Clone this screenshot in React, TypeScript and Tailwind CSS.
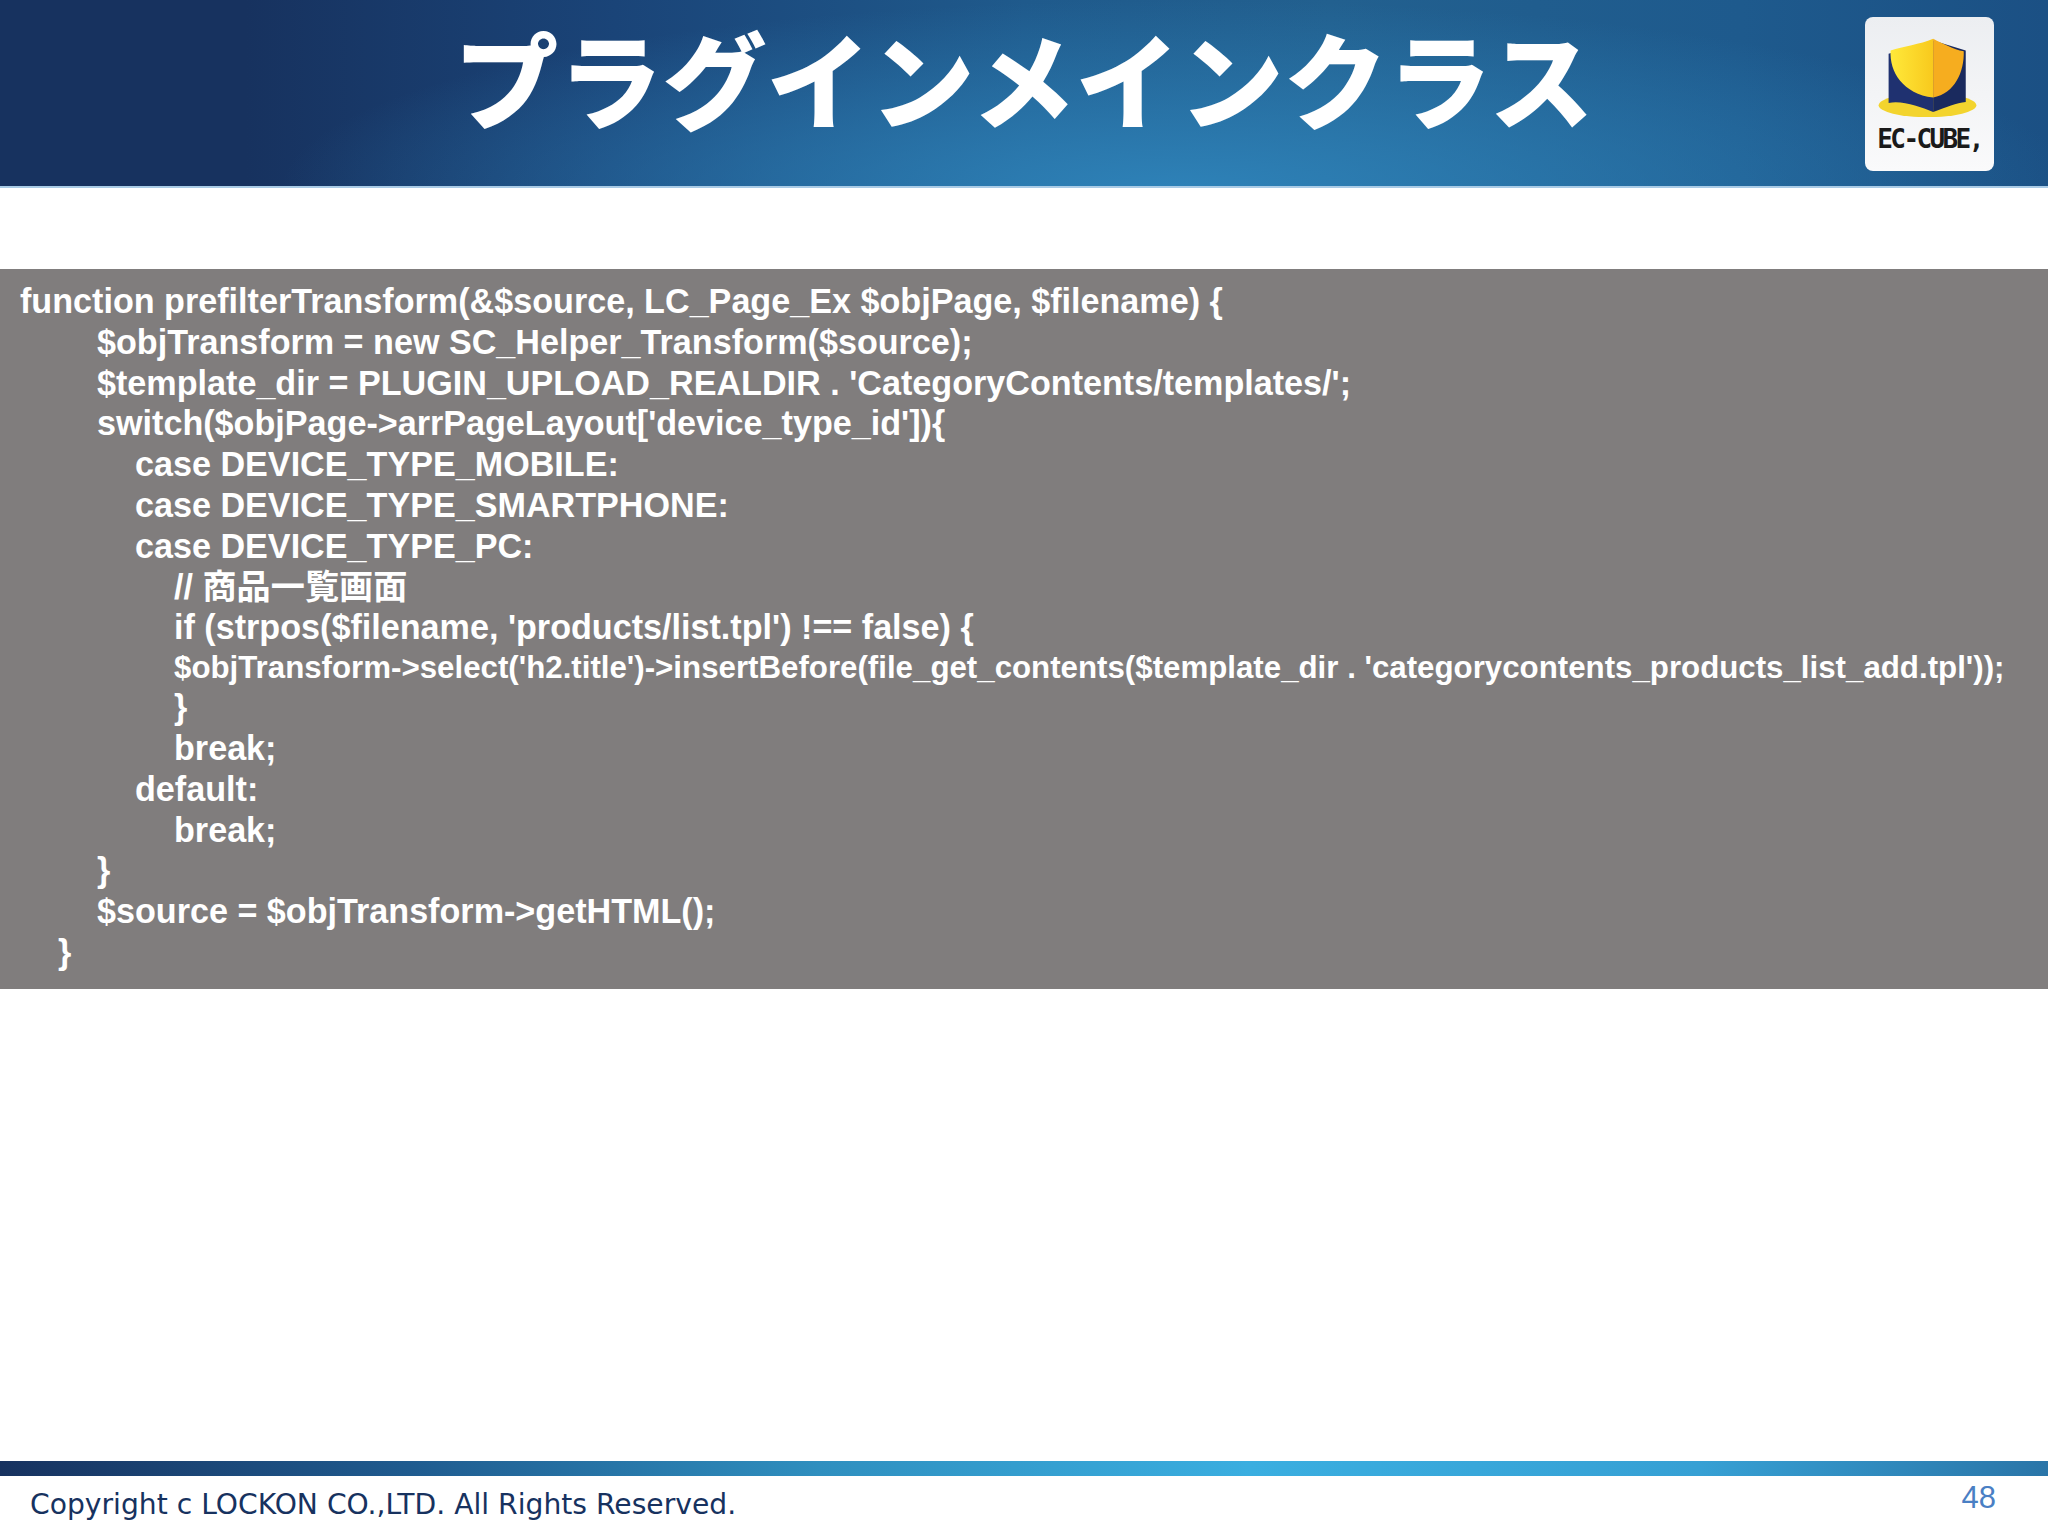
const lines: { text: string; indent: string; small?: boolean }[] = [
  { text: "function prefilterTransform(&$source, LC_Page_Ex $objPage, $filename) {", indent: "pl-[20px]" },
  { text: "$objTransform = new SC_Helper_Transform($source);", indent: "pl-[97px]" },
  { text: "$template_dir = PLUGIN_UPLOAD_REALDIR . 'CategoryContents/templates/';", indent: "pl-[97px]" },
  { text: "switch($objPage->arrPageLayout['device_type_id']){", indent: "pl-[97px]" },
  { text: "case DEVICE_TYPE_MOBILE:", indent: "pl-[135px]" },
  { text: "case DEVICE_TYPE_SMARTPHONE:", indent: "pl-[135px]" },
  { text: "case DEVICE_TYPE_PC:", indent: "pl-[135px]" },
  { text: "// 商品一覧画面", indent: "pl-[174px]" },
  { text: "if (strpos($filename, 'products/list.tpl') !== false) {", indent: "pl-[174px]" },
  { text: "$objTransform->select('h2.title')->insertBefore(file_get_contents($template_dir . 'categorycontents_products_list_add.tpl'));", indent: "pl-[174px]", small: true },
  { text: "}", indent: "pl-[174px]" },
  { text: "break;", indent: "pl-[174px]" },
  { text: "default:", indent: "pl-[135px]" },
  { text: "break;", indent: "pl-[174px]" },
  { text: "}", indent: "pl-[97px]" },
  { text: "$source = $objTransform->getHTML();", indent: "pl-[97px]" },
  { text: "}", indent: "pl-[58px]" },
];

function Logo() {
  return (
    <div className="flex h-[154px] w-[129px] flex-col items-center rounded-[8px] bg-[linear-gradient(180deg,#eceef1,#fafafb)]">
      <svg viewBox="195 50 388 300" className="h-[100px] w-[129px]">
        <defs>
          <linearGradient id="shieldLeft" x1="0" x2="1" y1="0" y2="0">
            <stop offset="0" stopColor="#ffe93a" />
            <stop offset="1" stopColor="#f8c91d" />
          </linearGradient>
        </defs>
        <ellipse cx="383" cy="315" rx="147" ry="36" fill="#f3d42e" />
        <path d="M266 160 L266 308 C310 300 360 320 400 335 L400 120 Z" fill="#1f3170" />
        <path d="M400 120 L400 335 C440 320 470 308 498 305 L498 150 Z" fill="#1a2a5e" />
        <path d="M400 115 C360 132 310 138 272 150 C268 215 310 280 400 292 Z" fill="url(#shieldLeft)" />
        <path d="M400 115 C430 130 460 146 492 153 C494 215 465 280 400 292 Z" fill="#f6ad1f" />
      </svg>
      <div className="mt-[8px] font-['DejaVu_Sans_Mono',monospace] text-[26px] leading-[28px] font-bold tracking-[-2.6px] text-[#1a1a1a]">
        EC-CUBE,
      </div>
    </div>
  );
}

export default function App() {
  return (
    <div className="flex h-[1536px] flex-col bg-white">
      <header className="relative flex h-[188px] items-center justify-center border-b-2 border-[#a9cbe6] bg-[radial-gradient(ellipse_900px_190px_at_1180px_190px,rgba(46,130,184,1)_0%,rgba(46,130,184,0)_100%),linear-gradient(90deg,#17325f_0%,#17325f_12%,#1a4478_30%,#1f5a8c_50%,#22608f_65%,#1e5a8d_85%,#1b5084_100%)]">
        <h1 className="pb-[32px] font-['Noto_Sans_CJK_JP',sans-serif] text-[104px] leading-none font-black text-white">
          プラグインメインクラス
        </h1>
        <div className="absolute top-[17px] right-[54px]">
          <Logo />
        </div>
      </header>

      <main className="mt-[81px] bg-[#807d7d] pt-[12px] pb-[16px] font-['Liberation_Sans','Noto_Sans_CJK_JP',sans-serif] font-bold text-white">
        {lines.map((line, i) => (
          <div
            key={i}
            className={`${line.indent} whitespace-nowrap ${line.small ? "h-[39px] text-[31.25px] leading-[39px]" : "h-[40.8px] text-[34.15px] leading-[40.8px]"}`}
          >
            {line.text}
          </div>
        ))}
      </main>

      <div className="flex-1" />

      <footer>
        <div className="h-[15px] bg-[linear-gradient(90deg,#17325f_0%,#1f5b8f_20%,#2f8fbf_40%,#3aaee0_61%,#36a0d4_83%,#2a75a8_100%)]" />
        <div className="flex h-[60px] items-start justify-between pr-[52px] pl-[30px]">
          <span className="pt-[11px] font-['DejaVu_Sans',sans-serif] text-[28.2px] leading-[36px] text-[#17325f]">
            Copyright c LOCKON CO.,LTD. All Rights Reserved.
          </span>
          <span className="pt-[4px] font-['Liberation_Sans',sans-serif] text-[31px] leading-[36px] text-[#4a7fc4]">48</span>
        </div>
      </footer>
    </div>
  );
}
